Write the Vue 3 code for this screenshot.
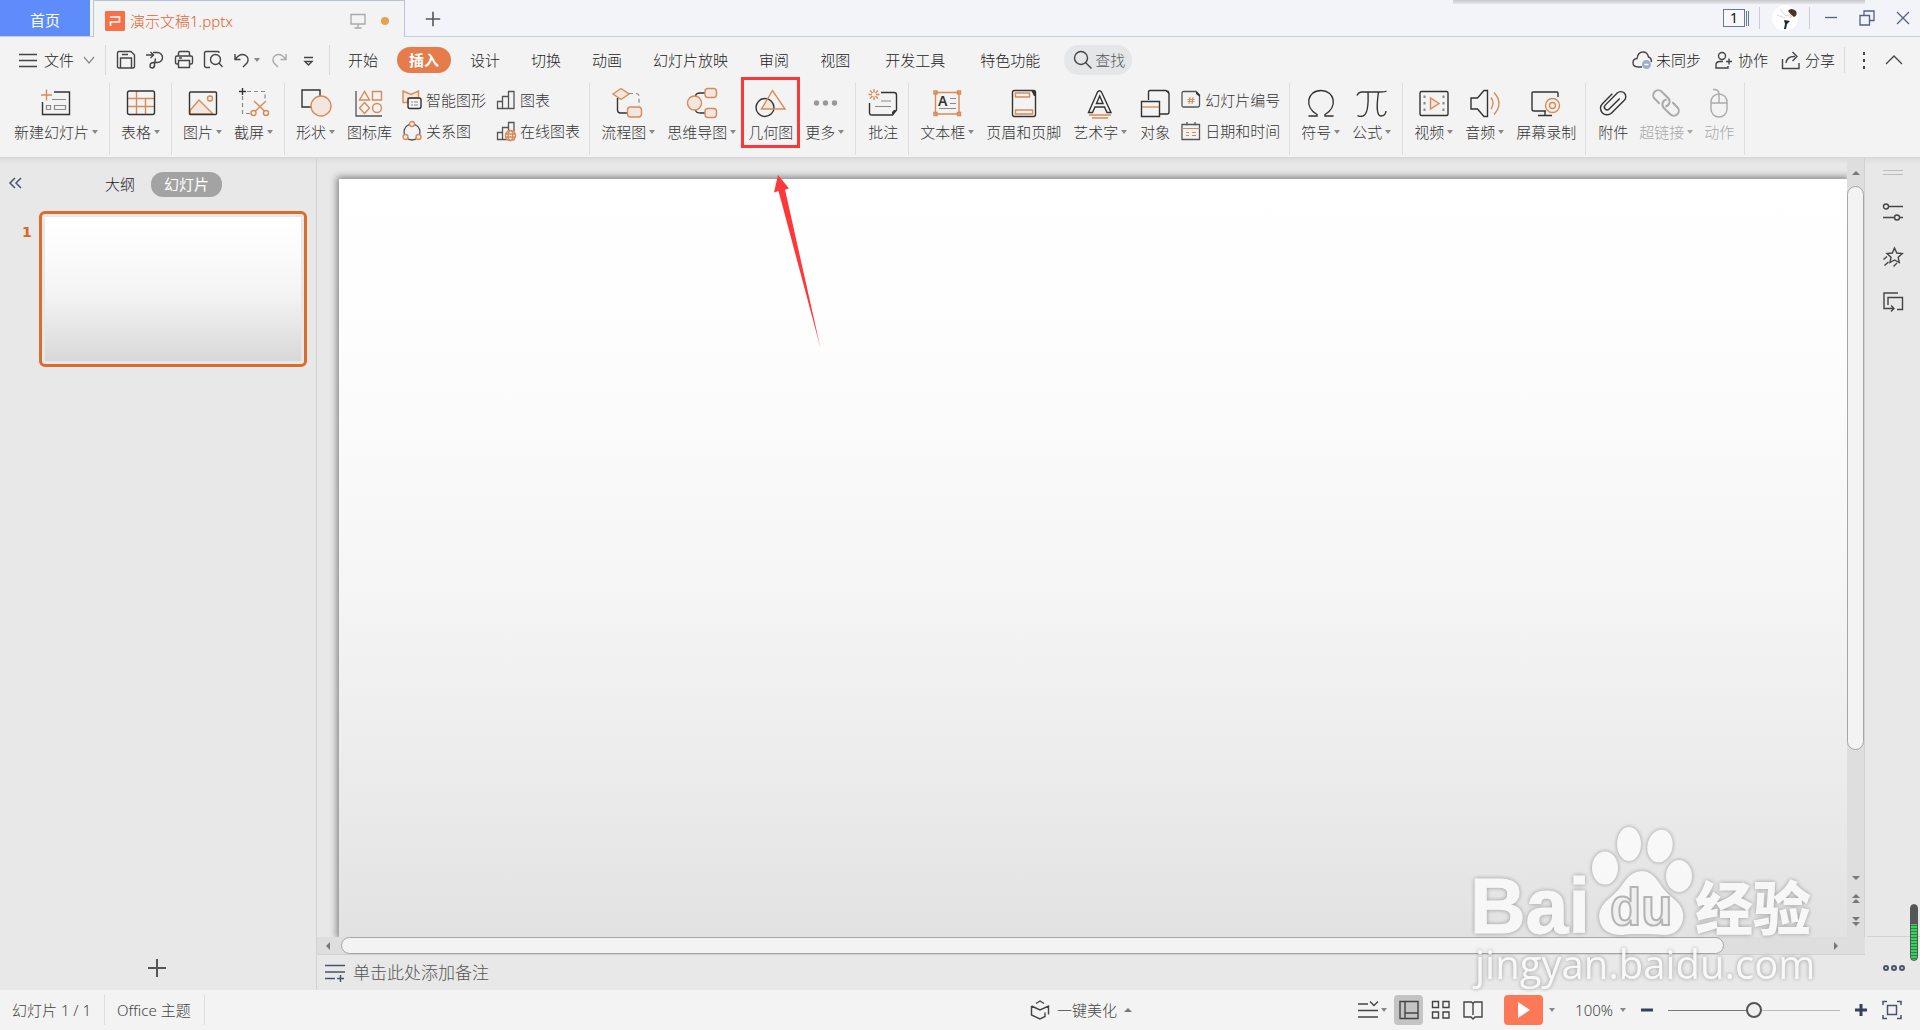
<script setup>
import { ref } from 'vue'

const zoom = ref(50)
const notes = ref('')

const icons = {
  newSlide: '<path class="o" d="M1 8H12M6.500 2.500V13.500"/><path class="k" d="M14 5H29.500V27.500H2.500V15"/><path class="g" d="M12 12.500H26M6.500 18.500h4v4h-4zM14.500 18.500h11v4h-11z"/>',
  table: '<path class="o" d="M3 11.500H29M3 19.500H29M11.500 4V27M20.500 11.500V27"/><rect class="k" x="2.500" y="4" width="27" height="23.500" rx="2"/>',
  picture: '<path class="of" d="M3 23.500L12 13L26 27H3z"/><circle class="o" cx="23" cy="11.500" r="2.500"/><rect class="k" x="2.500" y="5" width="27" height="22.500" rx="1"/>',
  crop: '<path class="g" stroke-dasharray="4 3" d="M9 4.500H27V14M4.500 9V26.500H12"/><path class="k" d="M1 4.500H8M4.500 1V8"/><g class="o"><circle cx="15.500" cy="26" r="2.500"/><circle cx="28" cy="26" r="2.500"/><path d="M17.500 24L28 14M26.500 24L16 14"/></g>',
  shape: '<path class="k" d="M2 3H20V20H2z"/><circle class="of" cx="21" cy="19" r="10"/>',
  library: '<path class="g2" d="M2 4V29H28"/><path class="o" d="M10.500 4.500L5.500 13H15.500zM18.500 4.500h9V13h-9zM10.500 15.500l5 5.500l-5 5.500l-5 -5.500z"/><circle class="o" cx="23" cy="21" r="4.500"/>',
  flow: '<path class="of" d="M1 7L9 1.500L17 7L9 12.500z"/><path class="g" stroke-dasharray="4 3" d="M17 6.500H24Q27 6.500 27 9.500V19"/><path class="k" d="M5.500 11V23Q5.500 26 8.500 26H15"/><rect class="of" x="15.500" y="20" width="14" height="10" rx="3"/>',
  mind: '<path class="k" d="M9.500 9Q10 6 14 6H19M9.500 23Q10 26 14 26H19"/><circle class="of" cx="8.500" cy="16" r="7"/><rect class="of" x="19" y="1.500" width="11.500" height="9" rx="3"/><rect class="of" x="19" y="21.500" width="11.500" height="9" rx="3"/>',
  geometry: '<path fill="#f3e6df" d="M7 22L12.500 12Q19 15 19 22z"/><circle class="k" cx="10" cy="20.500" r="9"/><path class="o" d="M17.500 3.500L6.500 22H30z"/>',
  more: '<g fill="#999"><circle cx="7.500" cy="16" r="2.700"/><circle cx="16.500" cy="16" r="2.700"/><circle cx="25.500" cy="16" r="2.700"/></g>',
  comment: '<path class="o" d="M7 2V5.500M7 9.500V13M1.500 7.500H5M9 7.500H12.500M3 3.500L5.500 6M11 3.500L8.500 6M3 11.500L5.500 9M11 11.500L8.500 9"/><path class="k" d="M14 5.500H27Q29.500 5.500 29.500 8V23L25.500 28H5Q2.500 28 2.500 25.500V16"/><path fill="#333" d="M30 23H27L25 25V28z"/><path class="g" d="M14 14H24M8 19.500H24"/>',
  textbox: '<path class="o" d="M4.500 5.500H28V27H4.500z"/><path class="o" fill="#fff" d="M3 4h3v3h-3zM26.500 4h3v3h-3zM3 25.500h3v3h-3zM26.500 25.500h3v3h-3z"/><text x="7" y="19" font-size="14" font-weight="600" fill="#333">A</text><path class="g" d="M19 11.500H25M19 16.500H25M8 21.500H25"/>',
  header: '<rect class="k" x="4.500" y="3.500" width="23" height="26" rx="2"/><path fill="#333" d="M23 3h3l2 2v4h-2z"/><path class="o" d="M7.500 6h14v4h-14zM7.500 23h17v4h-17z"/>',
  wordart: '<path class="k" d="M4.500 25.500L13.500 5Q15.500 2.500 17.500 5L27 25.500H23L20.500 20H11L8.500 25.500zM12.500 16.500L15.700 9L19 16.500z"/><path class="o" d="M5 28H27M8 31H24"/>',
  object: '<path class="k" d="M9.500 13V5Q9.500 3.500 11 3.500H27L30 6V25Q30 27 28 27H21M2.500 14.500H20.500V29.500H2.500z"/><path class="o" d="M3 20H20"/><path fill="#333" d="M26 3l4 4v-3z"/>',
  omega: '<path class="k" d="M3.500 29H12V27.500C-1 20 2 3.500 16 3.500S33 20 20 27.500V29H28.500"/>',
  pi: '<path class="k" d="M1 8.500Q2.500 5 6 5H24Q29 5 30.500 4M12 5Q13 27 7 29Q3 30 1.500 28.500M22.500 5Q19 29 25 29Q29.500 29 30 24"/>',
  video: '<rect class="k" x="2" y="4.500" width="28" height="24" rx="1.500"/><path class="of" d="M12.500 11V22L21 16.500z"/><path fill="#888" d="M5.500 8.500h2v2.500h-2zM5.500 15h2v2.500h-2zM5.500 21.500h2v2.500h-2zM24.500 8.500h2v2.500h-2zM24.500 15h2v2.500h-2zM24.500 21.500h2v2.500h-2z"/>',
  audio: '<path class="k" d="M2 11H8.500L15 3.500H18.500V29.500H15L8.500 22H2z"/><path class="o" d="M22 10.500Q26 16 22 22M25 5.500Q35 16.500 25 27.500"/>',
  record: '<path class="k" d="M28 10V6Q28 5 27 5H3Q2 5 2 6V22Q2 24 4 24H16M15 24V28M8 28.500H22"/><circle class="o" cx="22.500" cy="18.500" r="7"/><circle class="o" cx="22.500" cy="18.500" r="3"/>',
  clip: '<path class="k" transform="translate(16 16) rotate(-45)" d="M8 1.500H-7a2.750 2.750 0 0 1 0 -5.500H10a5 5 0 0 1 0 10H-8a6.500 6.500 0 0 1 0 -13H6"/>',
  link: '<g class="d" transform="translate(16 16) rotate(45)"><path d="M-4 5H-11a5 5 0 0 1 0 -10H-2a5 5 0 0 1 4 8"/><path d="M4 -5H11a5 5 0 0 1 0 10H2a5 5 0 0 1 -4 -8"/></g>',
  mouse: '<rect class="l" x="8" y="7" width="16" height="23" rx="8"/><path class="l" d="M8 16H24M16 16V7Q16 2 10 2.500"/>',
  smart: '<path class="of" d="M1 1L9 4.500L16.500 1V8H6V12.500H1z"/><rect class="k" x="6" y="8" width="13" height="10.500" rx="2"/><path class="g" d="M9 12H11M12 12H16M9 15H11M12 15H16"/>',
  relation: '<circle class="g2" cx="10" cy="11" r="8"/><g fill="#f3f3f3" stroke="#d88a58" stroke-width="1.400"><circle cx="10" cy="3" r="2.500"/><circle cx="3.500" cy="16" r="2.500"/><circle cx="16.500" cy="16" r="2.500"/></g>',
  chart: '<path class="g2" d="M1.500 11.500h5v7h-5zM6.500 6.500h6v12h-6zM12.500 1.500h5.500v17h-5.500z"/>',
  online: '<path class="g2" d="M1.500 11.500h5v7h-5zM6.500 6.500h6v12h-6zM12.500 1.500h5.500v17h-5.500z"/><circle cx="14.500" cy="14.500" r="5.500" fill="#f3f3f3"/><g class="o"><circle cx="14.500" cy="14.500" r="5"/><ellipse cx="14.500" cy="14.500" rx="2.200" ry="5"/><path d="M9.500 13H19.500M9.500 16H19.500"/></g>',
  number: '<path class="g2" d="M2.500 1.500H15L18.500 5V15Q18.500 17 16.500 17H2.500Q1 17 1 15.500V3Q1 1.500 2.500 1.500z"/><path fill="#333" d="M15 1l4 4v2l-4-3z"/><path stroke="#d88a58" stroke-width="1" d="M9 7L8 14M12 7L11 14M6.500 9.500H13.500M6.500 11.500H13.500"/>',
  date: '<path class="g2" d="M2 3.500H5M8 3.500H12M15 3.500H18.500V18.500H1V3.500zM6 1V4.500M14 1V4.500"/><path stroke="#d88a58" stroke-width="1" d="M1 7.500H18.500M5 11.500H8M11 11.500H15M5 14.500H8M11 14.500H15"/>',
  save: '<path class="m" d="M3 1.500H15L18.500 5V16.500Q18.500 18 17 18H3Q1.500 18 1.500 16.500V3Q1.500 1.500 3 1.500zM4.500 18V8H15.500V18M6 4.500H12"/>',
  export: '<path class="m" d="M1 5H8M5.500 2L8.500 5L5.500 8M8 2.500H12.500a5 5 0 0 1 0 10H9Q5 12.500 5 16Q5 18 7.500 18Q10 17.500 9.500 14L10.500 8.500"/>',
  print: '<path class="m" d="M4.500 6V3Q4.500 1.500 6 1.500H14Q15.500 1.500 15.500 3V6M4.500 14H3Q1.500 14 1.500 12.500V7.500Q1.500 6 3 6H17Q18.500 6 18.500 7.500V12.500Q18.500 14 17 14H15.500M4.500 10.500H15.500V17.500H4.500zM5 8H8"/>',
  preview: '<path class="m" d="M7 17.500H3.500Q1.500 17.500 1.500 15.500V3Q1.500 1.500 3 1.500H15Q16 1.500 16 3"/><circle class="m" cx="12.500" cy="9.500" r="5"/><path class="m" d="M16 13L19.500 17"/>',
  undo: '<path class="m" d="M3 4V9.500H8.500M3.500 9Q8 3 13 5Q18 8 15 13L11 17"/>',
  redo: '<path class="l" d="M17 4V9.500H11.500M16.500 9Q12 3 7 5Q2 8 5 13L9 17"/>',
  more2: '<path class="m" d="M6 7.500H15M7 11.500L10.500 15L14 11.500z"/>',
  cloud: '<path class="m" d="M10 17H6Q1 17 1 12.500Q1 9 5 8.500Q6 2 11 2Q15.500 2 16.500 7Q19.500 8 19.500 12"/><circle cx="14.500" cy="14.500" r="4.500" fill="#a3aec2"/><path stroke="#fff" stroke-width="1.500" d="M12.500 14.500H16.500"/>',
  collab: '<circle class="m" cx="8" cy="6" r="3.500"/><path class="m" d="M9 11.500H6Q2 11.500 2 15V18H14V16M12 11.500H18M15 8.500V14.500"/>',
  share: '<path class="m" d="M1.500 9V18.500H18V13M5 13Q6 6 14 6.500M11.500 2L16 6.500L11.500 11"/>',
  monitor: '<path class="l" d="M3 3.500H17V13H3zM10 13V16.500M6.500 17H13.500"/>',
  search: '<circle class="m" cx="8" cy="8" r="6.500"/><path class="m" stroke-width="2" d="M12.500 12.500L18.500 18.500"/>',
  plus: '<path stroke="#555" stroke-width="2" d="M10 1V19M1 10H19"/>',
  props: '<path class="m" d="M6 4.500H20M0 15.500H11M17 15.500H20"/><circle class="m" cx="3" cy="4.500" r="2.500"/><circle class="m" cx="14" cy="15.500" r="2.500"/>',
  star: '<path class="m" d="M11.500 1L13.800 6L19.300 6.500L15.200 10.300L16.300 15.500L11.500 13L7 15.500L8 10.300L4 6.500L9.300 6zM0.500 12.500L4 9.500M1.500 18.500L5.500 15M10.500 19.500L14 16"/>',
  swap: '<path class="m" d="M15 1H1V16.500H10.500M8 13.500L11 16.500L8 19.500M5 13V5.500H19.500V17.500H14"/>',
  notes: '<path stroke="#47536e" stroke-width="1.500" d="M0 3.500H20M0 10H20M0 16.500H10M12 16.500H19M15.500 13V20"/>',
  cube: '<path class="m" d="M6 3.500L10 1L14 3.500M1.500 6V15L10 19L15 16.500V12.500M1.500 6L10 10L18.500 6V14.500"/>',
  outline: '<path class="m" d="M0 4H10M12 1.500L16 5.500L20 1.500M0 10.500H20M0 17H20"/>',
  normal: '<path class="m" d="M1 1.500H19V18.500H1zM6 2V18M6 13H19"/>',
  grid: '<path class="m" d="M1.500 1.500h6v6h-6zM12 1.500h6v6h-6zM1.500 12h6v6h-6zM12 12h6v6h-6z"/>',
  book: '<path class="m" d="M1 2H8.500L10 3.500L11.500 2H19V17H12L10 19L8 17H1zM10 3.500V15"/>',
  fit: '<path fill="none" stroke="#47536e" stroke-width="1.500" d="M1 5V1.500H5M15 1.500H19V5M19 15V18.500H15M5 18.500H1V15M5.500 5.500h9v9h-9z"/>'
}

const quick = [
  { icon: 'save', label: '保存' },
  { icon: 'export', label: '输出' },
  { icon: 'print', label: '打印' },
  { icon: 'preview', label: '预览' }
]

const tabs = ['开始', '插入', '设计', '切换', '动画', '幻灯片放映', '审阅', '视图', '开发工具', '特色功能']

const groups = [
  { items: [{ icon: 'newSlide', text: '新建幻灯片', menu: true }] },
  { items: [{ icon: 'table', text: '表格', menu: true }] },
  { items: [{ icon: 'picture', text: '图片', menu: true }, { icon: 'crop', text: '截屏', menu: true }] },
  {
    items: [
      { icon: 'shape', text: '形状', menu: true },
      { icon: 'library', text: '图标库' },
      { stack: [{ icon: 'smart', text: '智能图形' }, { icon: 'relation', text: '关系图' }] },
      { stack: [{ icon: 'chart', text: '图表' }, { icon: 'online', text: '在线图表' }] }
    ]
  },
  {
    items: [
      { icon: 'flow', text: '流程图', menu: true },
      { icon: 'mind', text: '思维导图', menu: true },
      { icon: 'geometry', text: '几何图', marked: true },
      { icon: 'more', text: '更多', menu: true }
    ]
  },
  { items: [{ icon: 'comment', text: '批注' }] },
  {
    items: [
      { icon: 'textbox', text: '文本框', menu: true },
      { icon: 'header', text: '页眉和页脚' },
      { icon: 'wordart', text: '艺术字', menu: true },
      { icon: 'object', text: '对象' },
      { stack: [{ icon: 'number', text: '幻灯片编号' }, { icon: 'date', text: '日期和时间' }] }
    ]
  },
  { items: [{ icon: 'omega', text: '符号', menu: true }, { icon: 'pi', text: '公式', menu: true }] },
  {
    items: [
      { icon: 'video', text: '视频', menu: true },
      { icon: 'audio', text: '音频', menu: true },
      { icon: 'record', text: '屏幕录制' }
    ]
  },
  {
    items: [
      { icon: 'clip', text: '附件' },
      { icon: 'link', text: '超链接', menu: true, off: true },
      { icon: 'mouse', text: '动作', off: true }
    ]
  }
]
</script>

<template>
  <div class="app">
    <header class="titlebar">
      <button class="home">首页</button>
      <div class="doc">
        <svg class="logo" viewBox="0 0 20 20">
          <rect width="20" height="20" rx="1" fill="#f8704a" />
          <path d="M5 6H14.500V11H5.500V15" fill="none" stroke="#fff" stroke-width="1.600" />
        </svg>
        <span class="doc-name">演示文稿1.pptx</span>
        <svg class="ic" viewBox="0 0 20 20" v-html="icons.monitor"></svg>
        <span class="unsaved"></span>
      </div>
      <button class="add-tab" aria-label="新建标签"><svg class="ic s16" viewBox="0 0 20 20" v-html="icons.plus"></svg></button>
      <div class="window-tools">
        <span class="count"><b>1</b><i></i><i></i></span>
        <span class="divider short"></span>
        <svg class="avatar" viewBox="0 0 26 26">
          <circle cx="13" cy="13" r="13" fill="#fff" />
          <path d="M16 6Q19 2 24 6Q26 10 22 12Q18 9 16 6z" fill="#4a3128" />
          <path d="M17 8L21 12L18 13z" fill="#f2d2bd" />
          <path d="M8 4L14 11L17 10M5 10L13 13" fill="none" stroke="#d9d9de" />
          <path d="M12 15L18 16L15 19L14 24H12L13 19z" fill="#1d2733" />
        </svg>
        <span class="divider short"></span>
        <button class="win" aria-label="最小化"><svg viewBox="0 0 16 16"><path d="M2 7.500H14" /></svg></button>
        <button class="win" aria-label="还原"><svg viewBox="0 0 16 16"><path d="M1 5.500H10.500V15H1zM5 5V1H15V10.500H11" /></svg></button>
        <button class="win" aria-label="关闭"><svg viewBox="0 0 16 16"><path d="M2 2L14 14M14 2L2 14" /></svg></button>
      </div>
      <div class="top-shade"></div>
    </header>

    <nav class="menubar">
      <button class="file">
        <svg class="ic" viewBox="0 0 20 20"><path class="mm" d="M1 4.500H19M1 10.500H19M1 16.500H19" /></svg>
        <span>文件</span>
        <svg class="chev" viewBox="0 0 12 8"><path d="M1 1L6 7L11 1" /></svg>
      </button>
      <span class="divider"></span>
      <div class="quick">
        <button v-for="q in quick" :key="q.icon" :aria-label="q.label"><svg class="ic" viewBox="0 0 20 20" v-html="icons[q.icon]"></svg></button>
        <button class="undo" aria-label="撤销"><svg class="ic" viewBox="0 0 20 20" v-html="icons.undo"></svg><i class="caret"></i></button>
        <button aria-label="恢复"><svg class="ic" viewBox="0 0 20 20" v-html="icons.redo"></svg></button>
        <button aria-label="自定义"><svg class="ic" viewBox="0 0 20 20" v-html="icons.more2"></svg></button>
      </div>
      <span class="divider"></span>
      <div class="tabs">
        <button v-for="t in tabs" :key="t" :class="{ active: t === '插入', wide: t.length === 4 }">{{ t }}</button>
      </div>
      <button class="search"><svg class="ic" viewBox="0 0 20 20" v-html="icons.search"></svg>查找</button>
      <div class="account">
        <button><svg class="ic" viewBox="0 0 20 20" v-html="icons.cloud"></svg>未同步</button>
        <button><svg class="ic" viewBox="0 0 20 20" v-html="icons.collab"></svg>协作</button>
        <button><svg class="ic" viewBox="0 0 20 20" v-html="icons.share"></svg>分享</button>
        <span class="divider mid"></span>
        <button class="dots" aria-label="更多"><i></i><i></i><i></i></button>
        <button aria-label="收起"><svg class="fold" viewBox="0 0 18 10"><path d="M1 9L9 1L17 9" /></svg></button>
      </div>
    </nav>

    <section class="ribbon">
      <div v-for="(g, n) in groups" :key="n" class="group" :class="{ tight: !g.items[g.items.length - 1].menu }">
        <template v-for="(it, k) in g.items" :key="k">
          <div v-if="it.stack" class="stack">
            <button v-for="s in it.stack" :key="s.text" class="small">
              <svg class="ic" viewBox="0 0 20 20" v-html="icons[s.icon]"></svg>{{ s.text }}
            </button>
          </div>
          <button v-else class="tool" :class="{ off: it.off }">
            <svg class="ic big" viewBox="0 0 32 32" v-html="icons[it.icon]"></svg>
            <span class="label">{{ it.text }}<i v-if="it.menu" class="caret"></i></span>
            <span v-if="it.marked" class="mark"></span>
            <svg v-if="it.marked" class="pointer" viewBox="0 0 50 176"><path d="M5 1L16 14.500L12 15.500L47.500 174L5.500 17L1 18.500z" /></svg>
          </button>
        </template>
      </div>
    </section>

    <main class="work">
      <aside class="panel">
        <div class="panel-head">
          <button class="collapse" aria-label="收起面板"><svg viewBox="0 0 14 12"><path d="M7 1L2 6L7 11M13 1L8 6L13 11" /></svg></button>
          <button class="ptab">大纲</button>
          <button class="ptab on">幻灯片</button>
        </div>
        <div class="thumb-row">
          <span class="num">1</span>
          <div class="thumb"><div class="thumb-slide"></div></div>
        </div>
        <button class="add-slide" aria-label="新建幻灯片"><svg class="ic" viewBox="0 0 20 20" v-html="icons.plus"></svg></button>
      </aside>

      <section class="editor">
        <div class="canvas-row">
          <div class="canvas"><div class="slide"></div></div>
          <div class="vscroll">
            <i class="tri up"></i>
            <div class="vtrack"><div class="vthumb"></div></div>
            <i class="tri down"></i>
            <span class="pair"><i class="tri up"></i><i class="tri up"></i></span>
            <span class="pair"><i class="tri down"></i><i class="tri down"></i></span>
          </div>
        </div>
        <div class="hscroll">
          <i class="tri left"></i>
          <div class="htrack"><div class="hthumb"></div></div>
          <i class="tri right"></i>
        </div>
        <label class="notes">
          <svg class="ic" viewBox="0 0 20 20" v-html="icons.notes"></svg>
          <input v-model="notes" type="text" placeholder="单击此处添加备注" />
        </label>
      </section>

      <aside class="side">
        <span class="grip"></span>
        <button aria-label="属性"><svg class="ic" viewBox="0 0 20 20" v-html="icons.props"></svg></button>
        <button aria-label="动画"><svg class="ic" viewBox="0 0 20 20" v-html="icons.star"></svg></button>
        <button aria-label="切换"><svg class="ic" viewBox="0 0 20 20" v-html="icons.swap"></svg></button>
        <button class="side-more" aria-label="更多"><i></i><i></i><i></i></button>
        <span class="meter"></span>
      </aside>
    </main>

    <footer class="status">
      <div class="info">
        <span>幻灯片 1 / 1</span>
        <span>Office 主题</span>
      </div>
      <button class="beautify"><svg class="ic" viewBox="0 0 20 20" v-html="icons.cube"></svg>一键美化<i class="tri up"></i></button>
      <div class="views">
        <button class="outline" aria-label="备注"><svg class="ic" viewBox="0 0 20 20" v-html="icons.outline"></svg><i class="caret"></i></button>
        <button class="view on" aria-label="普通视图"><svg class="ic" viewBox="0 0 20 20" v-html="icons.normal"></svg></button>
        <button class="view" aria-label="浏览视图"><svg class="ic" viewBox="0 0 20 20" v-html="icons.grid"></svg></button>
        <button class="view" aria-label="阅读视图"><svg class="ic" viewBox="0 0 20 20" v-html="icons.book"></svg></button>
        <button class="play" aria-label="播放"><svg viewBox="0 0 12 16"><path d="M0 0L12 8L0 16z" fill="#fff" /></svg></button>
        <i class="caret"></i>
        <button class="percent">100%<i class="caret"></i></button>
        <button class="step" aria-label="缩小"><svg viewBox="0 0 14 14"><path d="M1 7H13" /></svg></button>
        <input v-model="zoom" class="zoom" type="range" min="0" max="100" aria-label="缩放" />
        <button class="step" aria-label="放大"><svg viewBox="0 0 14 14"><path d="M1 7H13M7 1V13" /></svg></button>
        <button class="fit" aria-label="适应窗口"><svg class="ic" viewBox="0 0 20 20" v-html="icons.fit"></svg></button>
      </div>
    </footer>

    <svg class="watermark" viewBox="0 0 350 170">
      <g class="wm-shape">
        <text class="wm-bai" x="0" y="111">Bai</text>
        <ellipse cx="135" cy="46" rx="13" ry="16.500" />
        <ellipse cx="159" cy="22" rx="12" ry="17" />
        <ellipse cx="190" cy="24" rx="12.500" ry="16.500" transform="rotate(12 190 24)" />
        <ellipse cx="209" cy="54" rx="13" ry="16" />
        <path d="M172 49Q182 49 190 62Q194 69 205 78Q215 86 213 98Q209 113 194 113Q184 112 172 112Q160 112 152 113Q130 113 129 94Q129 84 142 74Q150 67 155 59Q162 49 172 49z" />
        <text class="wm-cn" x="225" y="108">经验</text>
        <text class="wm-url" x="5" y="157">jingyan.baidu.com</text>
      </g>
      <text class="wm-du" x="140" y="103">du</text>
    </svg>
  </div>
</template>

<style>
body {
  margin: 0;
  background: #e8e8e8;
}
</style>

<style scoped>
.app {
  position: relative;
  display: flex;
  flex-direction: column;
  min-height: 100vh;
  font-family: 'Noto Sans', 'Noto Sans CJK SC', sans-serif;
  font-size: 15px;
  font-weight: 300;
  line-height: 20px;
  color: #222;
  background: #f3f3f3;
}
* { box-sizing: border-box; }
button, input { font: inherit; color: inherit; border: 0; padding: 0; margin: 0; background: none; }
button { display: flex; align-items: center; white-space: nowrap; }
svg { display: block; flex: none; }

.ic { width: 20px; height: 20px; overflow: visible; fill: none; }
.ic.s16 { width: 16px; height: 16px; }
.ic.big { width: 32px; height: 32px; }
.ic :deep(.k) { fill: none; stroke: #333; stroke-width: 1.4; }
.ic :deep(.m) { fill: none; stroke: #444; stroke-width: 1.4; }
.ic :deep(.g) { fill: none; stroke: #8a8a8a; stroke-width: 1.2; }
.ic :deep(.g2) { fill: none; stroke: #555; stroke-width: 1.3; }
.ic :deep(.l) { fill: none; stroke: #aaa; stroke-width: 1.4; }
.ic :deep(.d) { fill: none; stroke: #aaa; stroke-width: 2; }
.ic :deep(.o) { fill: none; stroke: #d88a58; stroke-width: 1.4; }
.ic :deep(.of) { fill: #f3e6df; stroke: #d88a58; stroke-width: 1.4; }
.mm { stroke: #444; stroke-width: 1.5; }

.caret, .tri {
  flex: none;
  width: 0;
  height: 0;
  border: 3px solid transparent;
}
.tri { border-width: 4px; }
.caret { border-top: 4px solid #888; border-bottom: 0; }
.tri.up { border-bottom: 4px solid #777; border-top: 0; }
.tri.down { border-top: 4px solid #777; border-bottom: 0; }
.tri.left { border-right: 4px solid #777; border-left: 0; }
.tri.right { border-left: 4px solid #777; border-right: 0; }

.divider { flex: none; width: 1px; height: 30px; background: #dadada; }
.divider.mid { height: 26px; }
.divider.short { height: 22px; background: #c9ccd4; }

/* title bar */
.titlebar {
  position: relative;
  display: flex;
  height: 37px;
  background: #f2f4f9;
  border-bottom: 1px solid #c3cfe0;
}
.home { justify-content: center; width: 90px; color: #fff; font-weight: 400; background: #5f8cfb; padding-top: 4px; }
.doc {
  display: flex;
  align-items: center;
  width: 312px;
  height: 37px;
  margin-left: 3px;
  padding: 4px 15px 0 11px;
  background: #f3f3f3;
  border: 1px solid #b9c3d6;
  border-bottom: 0;
}
.logo { width: 20px; height: 20px; }
.doc-name { flex: 1; margin-left: 5px; color: #e0632c; }
.unsaved { width: 8px; height: 8px; margin-left: 13px; border-radius: 50%; background: #e8a052; }
.add-tab { width: 16px; margin: 2px 0 0 20px; }
.window-tools { display: flex; align-items: center; margin-left: auto; padding-right: 9px; }
.count {
  display: flex;
  gap: 1px;
  height: 18px;
  margin-right: 10px;
  font-size: 14px;
  line-height: 16px;
  color: #111;
}
.count b { width: 22px; text-align: center; font-weight: 400; border: 1px solid #6a7796; background: #f6f8fc; }
.count i { width: 1px; height: 15px; margin: 2px 0 0; background: #6a7796; }
.avatar { width: 26px; height: 26px; margin: 0 11px 0 12px; }
.win { width: 16px; height: 16px; margin-left: 20px; }
.window-tools .divider + .win { margin-left: 13px; }
.win svg { width: 16px; height: 16px; fill: none; stroke: #54617f; stroke-width: 1.3; }
.top-shade {
  position: absolute;
  top: 0;
  right: 55px;
  width: 412px;
  height: 4px;
  background: linear-gradient(#c6c7ca, #e6e8ec);
}

/* menu bar */
.menubar { display: flex; align-items: center; height: 46px; padding: 0 17px 0 18px; }
.file { gap: 6px; margin-right: 10px; }
.chev { width: 12px; height: 8px; margin-left: 3px; fill: none; stroke: #888; stroke-width: 1.2; }
.quick { display: flex; align-items: center; gap: 9px; margin: 0 11px 0 10px; }
.undo { gap: 2px; }
.tabs { display: flex; gap: 7px; margin-left: 6px; }
.tabs button { height: 26px; padding: 0 12px; border-radius: 13px; }
.tabs .wide { margin-left: 4px; }
.tabs .active { color: #fff; font-weight: 600; background: #e67b4b; }
.search { gap: 2px; height: 30px; margin-left: 12px; padding: 0 7px 0 9px; border-radius: 15px; color: #555; background: #e5e6e8; }
.account { display: flex; align-items: center; margin-left: auto; }
.account button { gap: 4px; margin-right: 13px; }
.account button:last-child { margin-right: 0; }
.account .divider { margin-left: -4px; }
.account .dots { flex-direction: column; gap: 4px; margin: 0 20px 0 18px; }
.dots i { width: 2px; height: 3px; background: #444; }
.fold { width: 18px; height: 10px; fill: none; stroke: #444; stroke-width: 1.3; }

/* ribbon */
.ribbon { display: flex; height: 75px; padding: 0 3px; border-bottom: 1px solid #d6d6d6; }
.group { display: flex; gap: 12px; height: 72px; padding: 4px 11px 0; border-right: 1px solid #dedede; }
.group.tight { padding-right: 9px; }
.tool { position: relative; flex-direction: column; gap: 3px; height: 55px; }
.label { display: flex; align-items: center; gap: 3px; color: #333; }
.off .label { color: #a8a8a8; }
.off .caret { border-top-color: #aaa; }
.tool.off { margin-left: -2px; }
.stack { display: flex; flex-direction: column; gap: 11px; margin-left: -2px; padding-top: 3px; }
.small { gap: 4px; color: #333; }
.mark {
  position: absolute;
  inset: -10px -7px -6px;
  border: 3px solid #fb3737;
}
.pointer { position: absolute; left: 25px; top: 87px; z-index: 5; width: 50px; height: 176px; fill: #fc3838; }

/* work area */
.work {
  display: flex;
  flex: 1;
  background: linear-gradient(#dcdcdc, #e8e8e8 6px);
}
.panel { display: flex; flex-direction: column; width: 317px; border-right: 1px solid #d2d2d2; }
.panel-head { display: flex; align-items: center; height: 25px; margin: 14px 0 0 8px; }
.collapse svg { width: 14px; height: 12px; fill: none; stroke: #47536e; stroke-width: 1.5; }
.collapse { margin: -3px 83px 0 0; }
.ptab { height: 25px; padding-bottom: 2px; }
.ptab.on { margin-left: 16px; padding: 0 13px 2px; border-radius: 12px; color: #fff; font-weight: 400; background: #a3a3a3; }
.thumb-row { display: flex; margin: 14px 9px 0 22px; }
.num { width: 17px; padding-top: 11px; font: 700 14px/20px 'DejaVu Sans', sans-serif; color: #d9661f; }
.thumb { flex: 1; padding: 3px; border: 3px solid #dc6c2c; border-radius: 6px; }
.thumb-slide { aspect-ratio: 16 / 9; background: linear-gradient(#fff, #fbfbfb 25%, #f3f3f3 55%, #d8d8d8); }
.add-slide { margin: auto 0 12px 147px; }

.editor { display: flex; flex: 1; flex-direction: column; min-width: 0; }
.canvas-row { display: flex; flex: 1; }
.canvas { display: flex; flex: 1; padding: 21px 0 0 22px; overflow: hidden; }
.slide {
  flex: 1;
  background: linear-gradient(#fff, #fdfdfd 22%, #f6f6f6 52%, #ebebeb 80%, #e2e2e2);
  box-shadow: 0 0 7px 2px rgba(0, 0, 0, 0.45);
}
.vscroll {
  display: flex;
  position: relative;
  flex-direction: column;
  align-items: center;
  width: 18px;
  padding: 13px 0 11px;
  background: #dedede;
  border-right: 1px solid #d2d2d2;
}
.vtrack { align-self: stretch; flex: 1; margin: 11px 0; }
.vthumb { height: 83%; background: #f3f3f3; border: 1px solid #a5a5a5; border-radius: 9px; }
.pair { display: flex; flex-direction: column; gap: 1px; margin-top: 14px; }
.hscroll { display: flex; align-items: center; height: 18px; padding: 0 27px 0 9px; background: #dedede; border-bottom: 1px solid #d2d2d2; }
.htrack { flex: 1; margin: 0 6px 0 11px; }
.hthumb { width: 93%; height: 17px; background: #f3f3f3; border: 1px solid #a5a5a5; border-radius: 9px; }
.notes { display: flex; align-items: center; gap: 8px; height: 34px; margin-bottom: 1px; padding-left: 8px; }
.notes input { flex: 1; height: 24px; font-size: 17px; outline: 0; }
.notes input::placeholder { color: #555; opacity: 1; }

.side { position: relative; display: flex; flex-direction: column; align-items: center; gap: 25px; width: 55px; padding-top: 12px; }
.grip { width: 20px; height: 5px; margin-bottom: 2px; border: 1px solid #bdbdbd; border-width: 1px 0; }
.side-more { justify-content: center; gap: 2px; align-self: stretch; height: 54px; margin: auto 0 0 2px; padding-top: 8px; border-top: 1px solid #d2d2d2; }
.side-more i { width: 6px; height: 6px; border: 2px solid #47536e; border-radius: 50%; }
.meter {
  position: absolute;
  right: 2px;
  bottom: 29px;
  width: 8px;
  height: 57px;
  border: 1px solid #555;
  border-radius: 4px;
  background: linear-gradient(#555 19px, transparent 19px), repeating-linear-gradient(#2fd65c 0 2px, #3c7a4a 2px 3px);
}

/* status bar */
.status { display: flex; align-items: center; height: 40px; color: #444; }
.info { display: flex; flex: 1; }
.info span { height: 30px; padding: 5px 13px 0 12px; border-right: 1px solid #dedede; }
.beautify { gap: 7px; margin-right: 226px; }
.views { display: flex; align-items: center; padding-right: 18px; }
.outline { gap: 3px; margin-right: 7px; }
.view { justify-content: center; width: 29px; height: 30px; margin-right: 3px; border-radius: 4px; }
.view.on { background: #c4c4c4; }
.play { justify-content: center; width: 39px; height: 30px; margin: 0 6px 0 14px; border-radius: 4px; background: #fc7857; }
.play svg { width: 12px; height: 16px; }
.percent { gap: 7px; margin: 0 14px 0 20px; }
.step svg { width: 14px; height: 14px; stroke: #34405c; stroke-width: 3; }
.zoom {
  width: 172px;
  height: 18px;
  margin: 0 14px;
  appearance: none;
  background: linear-gradient(90deg, #777 50%, #bbb 50%) center / 100% 1px no-repeat;
}
.zoom::-webkit-slider-thumb {
  width: 16px;
  height: 16px;
  appearance: none;
  border: 2px solid #555;
  border-radius: 50%;
  background: #f0f0f0;
}
.fit { margin-left: 14px; }

/* site watermark */
.watermark {
  position: absolute;
  right: 100px;
  bottom: 38px;
  z-index: 6;
  width: 350px;
  height: 170px;
  overflow: visible;
  pointer-events: none;
}
.wm-shape { fill: #f9f9f9; filter: drop-shadow(0 0 2px rgba(0, 0, 0, 0.35)); opacity: 0.95; }
.wm-bai { font: 700 77px 'Liberation Sans', sans-serif; stroke: #f9f9f9; stroke-width: 1; }
.wm-cn { font: 900 58px 'Noto Sans CJK SC', sans-serif; }
.wm-url { font: 400 40px 'Open Sans', sans-serif; }
.wm-du { font: 700 51px 'Liberation Sans', sans-serif; fill: #f0f0f0; stroke: #b4b4b4; stroke-width: 2; }
</style>
